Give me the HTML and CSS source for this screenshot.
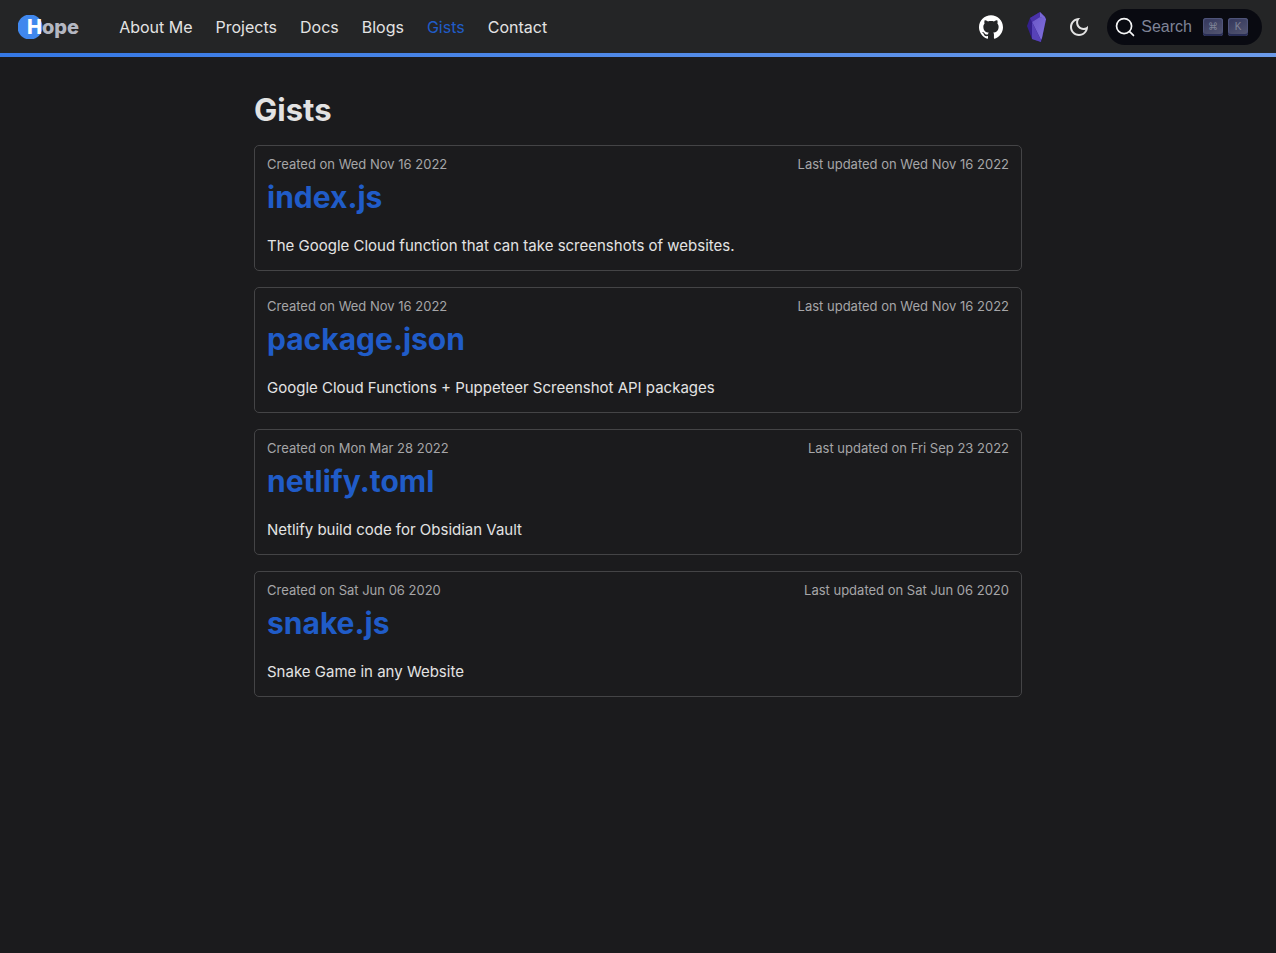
FILE: index.html
```html
<!DOCTYPE html>
<html lang="en">
<head>
    <meta charset="UTF-8">
    <meta name="viewport" content="width=device-width, initial-scale=1.0">
    <title>Gists</title>
    <link rel="stylesheet" href="styles.css">
</head>
<body>

    <nav class="navbar">
        <a class="logo" href="#"><span class="logo-first">H</span>ope</a>
        <div class="nav-links">
            <a href="#">About Me</a>
            <a href="#">Projects</a>
            <a href="#">Docs</a>
            <a href="#">Blogs</a>
            <a class="active" href="#">Gists</a>
            <a href="#">Contact</a>
        </div>
        <div class="nav-right">
            <a class="icon-link" href="#" aria-label="GitHub">
                <svg width="24" height="24" viewBox="0 0 24 24" fill="#fff"><path d="M12 .297c-6.63 0-12 5.373-12 12 0 5.303 3.438 9.8 8.205 11.385.6.113.82-.258.82-.577 0-.285-.01-1.04-.015-2.04-3.338.724-4.042-1.61-4.042-1.61C4.422 18.07 3.633 17.7 3.633 17.7c-1.087-.744.084-.729.084-.729 1.205.084 1.838 1.236 1.838 1.236 1.07 1.835 2.809 1.305 3.495.998.108-.776.417-1.305.76-1.605-2.665-.3-5.466-1.332-5.466-5.93 0-1.31.465-2.38 1.235-3.22-.135-.303-.54-1.523.105-3.176 0 0 1.005-.322 3.3 1.23.96-.267 1.98-.399 3-.405 1.02.006 2.04.138 3 .405 2.28-1.552 3.285-1.23 3.285-1.23.645 1.653.24 2.873.12 3.176.765.84 1.23 1.91 1.23 3.22 0 4.61-2.805 5.625-5.475 5.92.42.36.81 1.096.81 2.22 0 1.606-.015 2.896-.015 3.286 0 .315.21.69.825.57C20.565 22.092 24 17.592 24 12.297c0-6.627-5.373-12-12-12"/></svg>
            </a>
            <a class="icon-link" href="#" aria-label="Obsidian Vault">
                <svg width="20" height="30" viewBox="0 0 20 30">
                    <defs>
                        <linearGradient id="gem" x1="0" y1="0" x2="1" y2="1">
                            <stop offset="0" stop-color="#6b57c8"/>
                            <stop offset="1" stop-color="#8172dc"/>
                        </linearGradient>
                    </defs>
                    <path fill="#34208c" d="M13 0 L3 6 L0 14 L5 27 L14 30 L15 26 L19 7 L18 5 Z"/>
                    <path fill="#4a32a8" d="M13 0 L3 6 L5 10 L13 5 Z"/>
                    <path fill="#7868d4" d="M13 0 L13 5 L19 8 L18 5 Z"/>
                    <path fill="url(#gem)" d="M13 5 L5 10 L14 28 L15 26 L19 7 Z"/>
                    <path fill="#5742b8" d="M5 10 L5 27 L14 30 L14 28 Z"/>
                </svg>
            </a>
            <button class="theme-toggle" type="button" aria-label="Switch to light mode">
                <svg width="24" height="24" viewBox="0 0 24 24" fill="#e3e3e3"><path d="M9.37,5.51C9.19,6.15,9.1,6.82,9.1,7.5c0,4.08,3.32,7.4,7.4,7.4c0.68,0,1.35-0.09,1.99-0.27C17.45,17.19,14.93,19,12,19 c-3.86,0-7-3.14-7-7C5,9.07,6.81,6.55,9.37,5.51z M12,3c-4.97,0-9,4.03-9,9s4.03,9,9,9s9-4.03,9-9c0-0.46-0.04-0.92-0.1-1.36 c-0.98,1.37-2.58,2.26-4.4,2.26c-2.98,0-5.4-2.42-5.4-5.4c0-1.81,0.89-3.42,2.26-4.4C12.92,3.04,12.46,3,12,3L12,3z"/></svg>
            </button>
            <button class="search" type="button">
                <svg width="20" height="20" viewBox="0 0 20 20" fill="none" stroke="#f5f6f7" stroke-width="1.7" stroke-linecap="round" stroke-linejoin="round"><path d="M14.386 14.386l4.088 4.088-4.088-4.088c-2.942 2.942-7.711 2.942-10.653 0s-2.942-7.711 0-10.653 7.711-2.942 10.653 0 2.942 7.711 0 10.653z"/></svg>
                <span class="search-label">Search</span>
                <kbd>⌘</kbd>
                <kbd>K</kbd>
            </button>
        </div>
    </nav>

    <main class="container">
        <h1>Gists</h1>

        <article class="card">
            <div class="card-dates">
                <span>Created on Wed Nov 16 2022</span>
                <span>Last updated on Wed Nov 16 2022</span>
            </div>
            <h2><a href="#">index.js</a></h2>
            <p>The Google Cloud function that can take screenshots of websites.</p>
        </article>

        <article class="card">
            <div class="card-dates">
                <span>Created on Wed Nov 16 2022</span>
                <span>Last updated on Wed Nov 16 2022</span>
            </div>
            <h2><a href="#">package.json</a></h2>
            <p>Google Cloud Functions + Puppeteer Screenshot API packages</p>
        </article>

        <article class="card">
            <div class="card-dates">
                <span>Created on Mon Mar 28 2022</span>
                <span>Last updated on Fri Sep 23 2022</span>
            </div>
            <h2><a href="#">netlify.toml</a></h2>
            <p>Netlify build code for Obsidian Vault</p>
        </article>

        <article class="card">
            <div class="card-dates">
                <span>Created on Sat Jun 06 2020</span>
                <span>Last updated on Sat Jun 06 2020</span>
            </div>
            <h2><a href="#">snake.js</a></h2>
            <p>Snake Game in any Website</p>
        </article>
    </main>

</body>
</html>
```
FILE: styles.css
```css
* {
    box-sizing: border-box;
}
body {
    margin: 0;
    background-color: #1b1b1d;
    color: #e3e3e3;
    font-family: Inter, sans-serif;
    font-size: 15px;
    line-height: 24px;
}
a {
    color: inherit;
    text-decoration: none;
}
.navbar {
    display: flex;
    align-items: center;
    height: 57px;
    padding: 0 14px 0 18px;
    background-color: #242526;
    border-bottom: 4px solid;
    border-image: linear-gradient(to right, #3578e5, #6c9bea) 1;
}
.logo {
    padding-left: 9px;
    margin-right: 40px;
    color: #b4b7c1;
    font-size: 20px;
    font-weight: 800;
    background: radial-gradient(circle at 12px 12px, #4088ee 12px, transparent 13px) no-repeat;
}
.logo-first {
    color: #fff;
}
.nav-links {
    display: flex;
    gap: 23px;
    font-size: 16px;
}
.nav-links .active {
    color: #205cc8;
}
.nav-right {
    display: flex;
    align-items: center;
    margin-left: auto;
}
.icon-link {
    display: flex;
    margin-right: 24px;
}
.theme-toggle {
    display: flex;
    margin-right: 16px;
    padding: 0;
    border: none;
    background: none;
    cursor: pointer;
}
.icon-link + .theme-toggle {
    margin-left: -4px;
}
.search {
    display: flex;
    align-items: center;
    height: 36px;
    padding: 0 14px 0 8px;
    border: none;
    border-radius: 18px;
    background-color: #090a11;
    color: #7f8497;
    font-family: "Liberation Sans", Arial, sans-serif;
    font-size: 16px;
    cursor: pointer;
}
.search-label {
    padding: 0 11px 0 6px;
}
kbd {
    width: 20px;
    height: 18px;
    border-radius: 3px;
    background: linear-gradient(-26deg, #565872, #31355b);
    box-shadow: inset 0 -2px 0 #282d55, inset 0 0 1px 1px #51577d;
    color: #7f8497;
    font-family: "Liberation Sans", "DejaVu Sans", sans-serif;
    font-size: 10px;
    line-height: 17px;
    text-align: center;
}
kbd + kbd {
    margin-left: 5px;
}
.container {
    width: 100%;
    max-width: 800px;
    margin: 0 auto;
    padding: 32px 16px;
}
h1 {
    margin: 0 0 14px;
    font-size: 31px;
    line-height: 42px;
}
.card {
    margin-bottom: 16px;
    padding: 8px 12px 12px;
    border: 1px solid #444446;
    border-radius: 5px;
}
.card-dates {
    display: flex;
    justify-content: space-between;
    color: #a6a6a8;
    font-size: 13px;
    line-height: 20px;
}
.card h2 {
    margin: 0 0 14px;
    color: #205cc8;
    font-size: 30px;
    line-height: 46px;
}
.card p {
    margin: 0;
}
```
